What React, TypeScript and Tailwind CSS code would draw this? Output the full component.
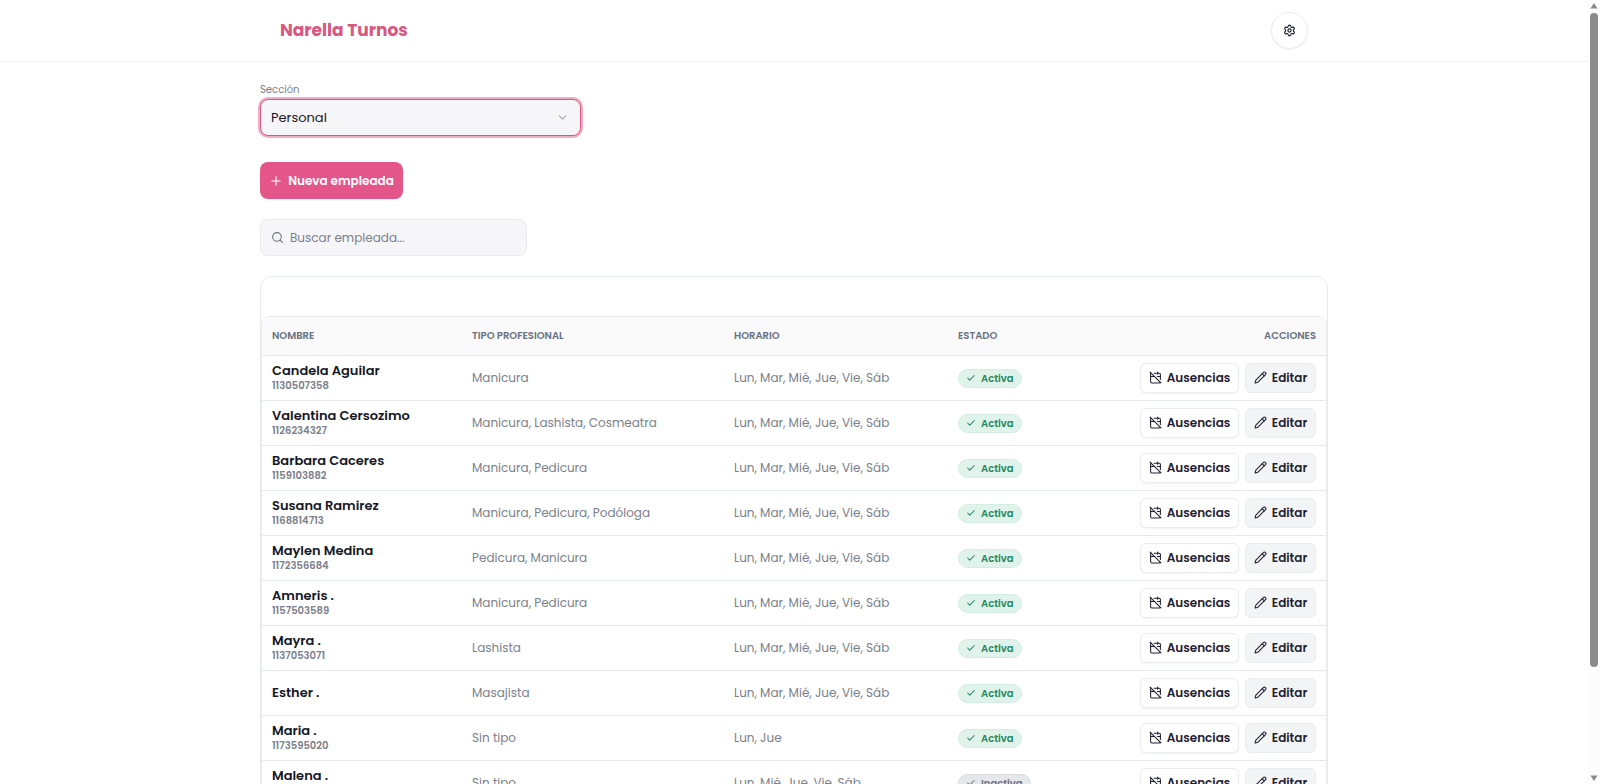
import { CalendarOff, Check, ChevronDown, Pencil, Plus, Search, Settings } from "lucide-react";

type Employee = {
  name: string;
  phone?: string;
  types: string;
  schedule: string;
  active: boolean;
};

const WEEK = "Lun, Mar, Mié, Jue, Vie, Sáb";

const employees: Employee[] = [
  { name: "Candela Aguilar", phone: "1130507358", types: "Manicura", schedule: WEEK, active: true },
  { name: "Valentina Cersozimo", phone: "1126234327", types: "Manicura, Lashista, Cosmeatra", schedule: WEEK, active: true },
  { name: "Barbara Caceres", phone: "1159103882", types: "Manicura, Pedicura", schedule: WEEK, active: true },
  { name: "Susana Ramirez", phone: "1168814713", types: "Manicura, Pedicura, Podóloga", schedule: WEEK, active: true },
  { name: "Maylen Medina", phone: "1172356684", types: "Pedicura, Manicura", schedule: WEEK, active: true },
  { name: "Amneris .", phone: "1157503589", types: "Manicura, Pedicura", schedule: WEEK, active: true },
  { name: "Mayra .", phone: "1137053071", types: "Lashista", schedule: WEEK, active: true },
  { name: "Esther .", types: "Masajista", schedule: WEEK, active: true },
  { name: "Maria .", phone: "1173595020", types: "Sin tipo", schedule: "Lun, Jue", active: true },
  { name: "Malena .", phone: "", types: "Sin tipo", schedule: "Lun, Mié, Jue, Vie, Sáb", active: false },
];

function StatusBadge({ active }: { active: boolean }) {
  const tone = active
    ? "border-[#d3eee1] bg-[#dff3ea] text-[#23885f]"
    : "border-[#d9dce1] bg-[#e5e7eb] text-[#6b7280]";
  return (
    <span className={`inline-flex h-[19px] items-center gap-[5px] rounded-full border px-[7px] align-middle text-[10px] font-semibold ${tone}`}>
      <Check size={10} strokeWidth={2.5} />
      {active ? "Activa" : "Inactiva"}
    </span>
  );
}

function EmployeeRow({ employee }: { employee: Employee }) {
  return (
    <tr className="h-[45px] border-b border-[#e7e8eb]">
      <td className="px-2.5">
        <div className="text-[13px] leading-4 font-semibold text-[#161827]">{employee.name}</div>
        {employee.phone !== undefined && (
          <div className="min-h-[13px] text-[10px] leading-[13px] font-semibold text-[#7b808b]">{employee.phone}</div>
        )}
      </td>
      <td className="px-2.5 text-xs text-[#7b808b]">{employee.types}</td>
      <td className="px-2.5 text-xs text-[#7b808b]">{employee.schedule}</td>
      <td className="px-2.5">
        <StatusBadge active={employee.active} />
      </td>
      <td className="px-2.5">
        <div className="flex justify-end gap-1.5">
          <button type="button" className="flex h-[30px] w-[99px] items-center justify-center gap-[5px] rounded-md border border-[#ebecef] bg-white text-xs font-semibold text-[#1f2130] shadow-xs">
            <CalendarOff size={13} strokeWidth={2} />
            Ausencias
          </button>
          <button type="button" className="flex h-[30px] w-[71px] items-center justify-center gap-[5px] rounded-md border border-[#ebecef] bg-[#f3f4f6] text-xs font-semibold text-[#1f2130]">
            <Pencil size={13} strokeWidth={2} />
            Editar
          </button>
        </div>
      </td>
    </tr>
  );
}

function ScrollTrack() {
  return (
    <div aria-hidden="true" className="flex w-3 shrink-0 flex-col items-center bg-[#fcfcfc] py-[3px]">
      <svg width="8" height="6" viewBox="0 0 8 6" fill="#8b8b8b">
        <path d="M4 0 7.6 5.4H.4Z" />
      </svg>
      <div className="mt-1 h-[84%] w-2 rounded-full bg-[#8b8b8b]" />
      <svg className="mt-auto" width="8" height="6" viewBox="0 0 8 6" fill="#8b8b8b">
        <path d="M4 6 7.6.6H.4Z" />
      </svg>
    </div>
  );
}

export default function App() {
  return (
    <div className="flex h-screen overflow-hidden bg-white font-['Poppins','Inter',sans-serif] text-[#161827]">
      <div className="min-w-0 flex-1 overflow-hidden">
        <header className="border-b border-[#f0f1f3]">
          <div className="mx-auto flex h-[61px] max-w-[1068px] items-center justify-between px-5">
            <h1 className="text-[17px] font-bold text-[#d9577f]">Narella Turnos</h1>
            <button type="button" aria-label="Configuración" className="flex size-[37px] items-center justify-center rounded-full border border-[#ebecf0] bg-white shadow-xs">
              <Settings size={13} strokeWidth={2} />
            </button>
          </div>
        </header>

        <main className="mx-auto max-w-[1068px] pt-5">
          <label htmlFor="section" className="block text-[10px] leading-4 text-[#7b808b]">
            Sección
          </label>
          <div className="relative mt-px w-[321px]">
            <select
              id="section"
              defaultValue="personal"
              className="block h-[37px] w-full appearance-none rounded-lg border border-[#d9577f] bg-[#f6f6f8] px-2.5 text-[13px] text-[#161827] ring-2 ring-[#efb0c6] outline-none"
            >
              <option value="personal">Personal</option>
            </select>
            <ChevronDown size={13} className="pointer-events-none absolute top-3 right-3 text-[#a3a6ae]" />
          </div>

          <button type="button" className="mt-[26px] flex h-[37px] w-[143px] items-center justify-center gap-[5px] rounded-lg bg-[#e4568a] text-xs font-semibold text-white shadow-xs">
            <Plus size={14} strokeWidth={2} />
            Nueva empleada
          </button>

          <div className="mt-5 flex h-[37px] w-[267px] items-center gap-1.5 rounded-lg border border-[#e9eaed] bg-[#f6f6f8] px-2.5">
            <Search size={13} className="shrink-0 text-[#6b7280]" />
            <input
              type="search"
              aria-label="Buscar empleada"
              placeholder="Buscar empleada..."
              className="min-w-0 flex-1 bg-transparent text-xs outline-none placeholder:text-[#7b808b]"
            />
          </div>

          <section className="mt-5 rounded-xl border border-[#e9eaed] pt-[39px] shadow-xs">
            <div className="overflow-hidden rounded-lg border border-[#ececef]">
              <table className="w-full table-fixed border-collapse text-left">
                <colgroup>
                  <col className="w-[200px]" />
                  <col className="w-[262px]" />
                  <col className="w-[224px]" />
                  <col className="w-[110px]" />
                  <col />
                </colgroup>
                <thead className="bg-[#fafafa] text-[10px] text-[#6b7280]">
                  <tr className="h-[38px] border-b border-[#e7e8eb]">
                    <th className="px-2.5 font-semibold">NOMBRE</th>
                    <th className="px-2.5 font-semibold">TIPO PROFESIONAL</th>
                    <th className="px-2.5 font-semibold">HORARIO</th>
                    <th className="px-2.5 font-semibold">ESTADO</th>
                    <th className="px-2.5 text-right font-semibold">ACCIONES</th>
                  </tr>
                </thead>
                <tbody>
                  {employees.map((employee) => (
                    <EmployeeRow key={employee.name} employee={employee} />
                  ))}
                </tbody>
              </table>
            </div>
          </section>
        </main>
      </div>
      <ScrollTrack />
    </div>
  );
}
